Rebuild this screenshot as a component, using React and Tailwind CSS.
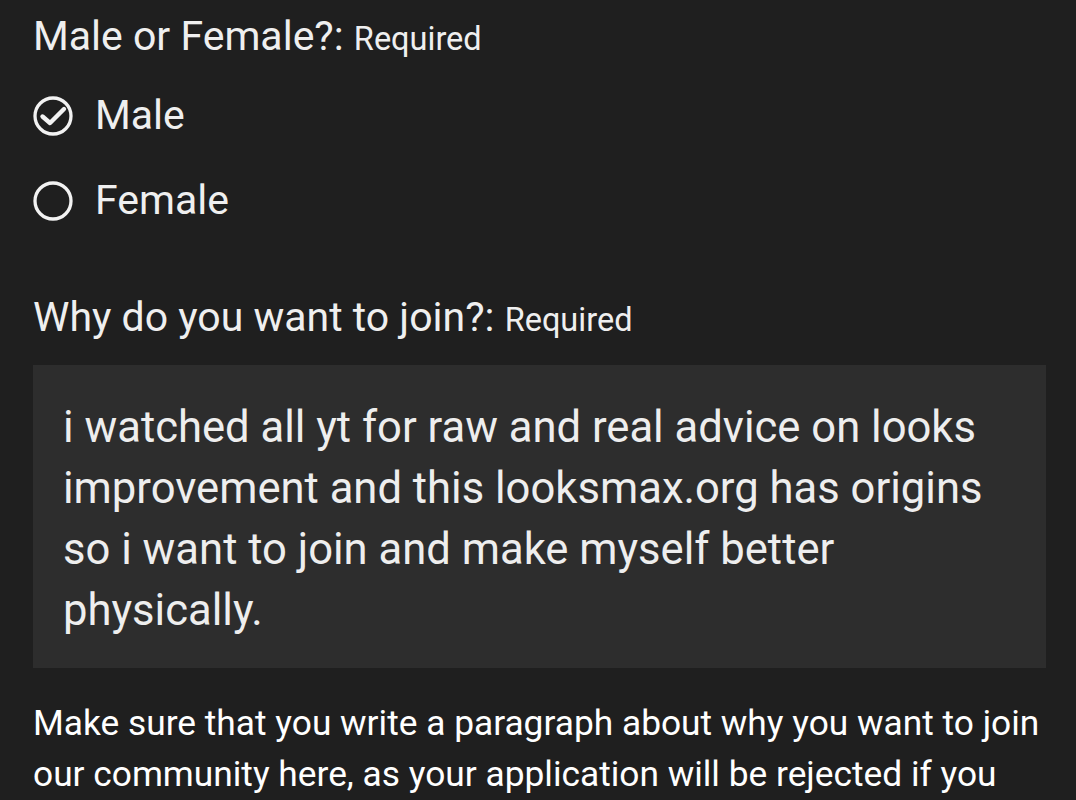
import React from 'react';

const Radio = ({ checked, label }) => (
  <div className="flex items-center h-[85px]">
    <svg width="40" height="40" viewBox="0 0 40 40" fill="none" stroke="#f2f2f2" strokeWidth="3.3">
      <circle cx="20" cy="20" r="18" />
      {checked && <path d="M9.5 20.5l7.5 6.5 14-14" strokeLinecap="round" strokeLinejoin="round" strokeWidth="4.4" />}
    </svg>
    <span className="ml-[22px] text-[41px] text-[#efefef]">{label}</span>
  </div>
);

export default function App() {
  return (
    <div className="min-h-[800px] w-full bg-[#1f1f1f] pl-[33px] pr-[30px] overflow-hidden" style={{ fontFamily: 'Roboto, "Noto Sans", sans-serif' }}>
      <div className="pt-[8px] text-[41px] leading-[56px] text-[#efefef]">
        Male or Female?: <span className="text-[32.5px]">Required</span>
      </div>
      <div className="mt-[6px]">
        <Radio checked label="Male" />
        <Radio label="Female" />
      </div>
      <div className="mt-[46px] text-[41px] leading-[56px] text-[#efefef]">
        Why do you want to join?: <span className="text-[32.5px]">Required</span>
      </div>
      <div className="mt-[17px] bg-[#2d2d2d] h-[303px] pl-[30px] pr-[40px] pt-[32px] text-[43.6px] leading-[61px] text-[#eeeeee]">
        i watched all yt for raw and real advice on looks improvement and this looksmax.org has origins so i want to join and make myself better physically.
      </div>
      <p className="mt-[30px] text-[35.3px] leading-[51px] text-white">
        Make sure that you write a paragraph about why you want to join our community here, as your application will be rejected if you don't.
      </p>
    </div>
  );
}
